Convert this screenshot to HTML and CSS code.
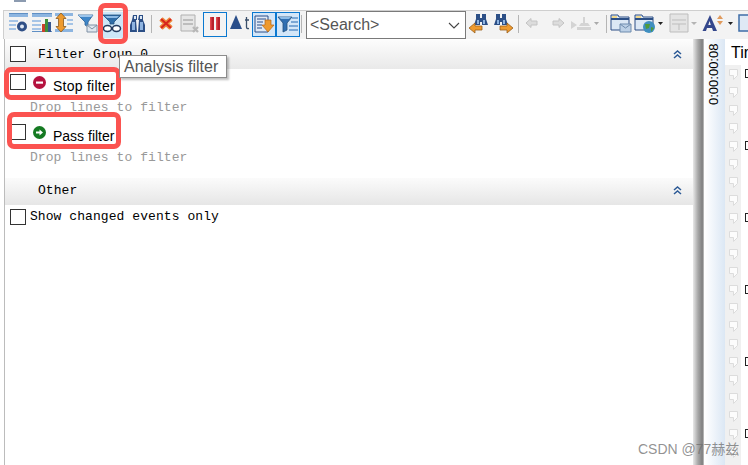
FILE: index.html
```html
<!DOCTYPE html>
<html lang="en">
<head>
    <meta charset="UTF-8">
    <meta name="viewport" content="width=device-width, initial-scale=1.0">
    <title>Analysis filter</title>
    <link rel="stylesheet" href="styles.css">
</head>
<body>
    <div class="top-strip"><span class="top-stub"></span></div>

    <div class="toolbar">
        <span class="tool"><svg width="22" height="22" viewBox="0 0 22 22"><path d="M0 1h19v4H0z" fill="#8db5e0"/><path d="M0 8h9v2H0zM0 12h7v2H0zM0 16h7v2H0z" fill="#a5c4e6"/><path d="M0 1h19v1H0z" fill="#5f8fc4"/><circle cx="13" cy="14.500" r="5" fill="#2f4f86"/><circle cx="13" cy="14.500" r="2" fill="#dfe8f4"/></svg></span>
        <span class="tool"><svg width="22" height="22" viewBox="0 0 22 22"><path d="M1 1h20v4H1z" fill="#8db5e0"/><path d="M1 8h9v2H1zM1 12h9v2H1zM1 16h9v2H1z" fill="#a5c4e6"/><path d="M1 1h20v1H1zM1 19h20v1H1z" fill="#5f8fc4"/><path d="M11 12h3v8h-3z" fill="#c8402c"/><path d="M14 7h3v13h-3z" fill="#3f8f3a"/><path d="M17 10h3v10h-3z" fill="#36558f"/></svg></span>
        <span class="tool"><svg width="22" height="22" viewBox="0 0 22 22"><path d="M2 1h18v3H2zM2 17h18v3H2z" fill="#8db5e0"/><path d="M14 7h6v2h-6zM14 11h6v2h-6z" fill="#a5c4e6"/><path d="M8 1l5 5.500h-2.500v8H13L8 20l-5-5.500h2.500v-8H3z" fill="#ee9a2e" stroke="#8a5a1e" stroke-width=".8"/></svg></span>
        <span class="tool gap-left"><svg width="24" height="22" viewBox="0 0 24 22"><path d="M1 3h15l-5 7v5l-3-2v-3z" fill="#3f86c8" stroke="#2a5f96" stroke-width=".8"/><path d="M1 3h15l-2 2H3z" fill="#9cc4ea"/><path d="M10 13h10v7H10z" fill="#dfe6ee" stroke="#7f90a4"/><path d="M10 13l5 4 5-4" fill="none" stroke="#7f90a4"/></svg></span>
        <span class="tool tool-on"><svg width="22" height="22" viewBox="0 0 22 22"><path d="M2 3h18l-7 7v2H9v-2z" fill="#2f6ea8" stroke="#21507e" stroke-width=".8"/><path d="M4 4h14l-2 2H6z" fill="#8cbbe6"/><ellipse cx="6.500" cy="16.500" rx="4" ry="3" fill="#fff" stroke="#223a5e" stroke-width="1.500"/><ellipse cx="15.500" cy="16.500" rx="4" ry="3" fill="#fff" stroke="#223a5e" stroke-width="1.500"/></svg></span>
        <span class="tool"><svg width="27" height="22" viewBox="0 0 27 22"><path d="M10 3h4v5h-1l1 12H7v-7l2-5zM16 3h4v5l2 5v7h-7l1-12h-1z" fill="#2c4f86"/><path d="M9 10h3v8H9zM17 10h3v8h-3z" fill="#8fb4e0"/><path d="M11 4h2v3h-2zM17 4h2v3h-2z" fill="#dce8f5"/></svg></span>
        <span class="sep"></span>
        <span class="tool"><svg width="24" height="22" viewBox="0 0 24 22"><path d="M7 7l10 9M17 7L7 16" stroke="#ee8a3c" stroke-width="5"/><path d="M7 7l10 9M17 7L7 16" stroke="#d8261c" stroke-width="2.200"/></svg></span>
        <span class="tool"><svg width="24" height="22" viewBox="0 0 24 22"><path d="M3 3h14v16H3z" fill="#e6e6e6" stroke="#b0b0b0"/><path d="M5 7h10v2H5zM5 11h10v2H5z" fill="#bdbdbd"/><path d="M15 15l5 5M20 15l-5 5" stroke="#b8b8b8" stroke-width="2.400"/></svg></span>
        <span class="tool tool-box tool-first"><svg width="22" height="22" viewBox="0 0 22 22"><path d="M6 4h4v13H6zM12 4h4v13h-4z" fill="#b8202a"/><path d="M6 4h1.500v13H6zM12 4h1.500v13H12z" fill="#e2474c"/></svg></span>
        <span class="tool"><svg width="25" height="22" viewBox="0 0 25 22"><path d="M9 3l6 14H3z" fill="#2b4f8a"/><path d="M18 8h4M19.500 5v10q0 2 2.500 1.500" fill="none" stroke="#3a4f6a" stroke-width="1.300"/></svg></span>
        <span class="tool tool-box tool-tint"><svg width="22" height="22" viewBox="0 0 22 22"><path d="M2 3h13v16H2z" fill="#dfe9f5" stroke="#2b4f8a"/><path d="M4 6h9M4 9h6M4 12h5M4 15h5" stroke="#2b4f8a"/><path d="M12 7h6v5h3l-6 7-6-7h3z" fill="#ee9a2e" stroke="#b0661a" stroke-width=".7"/></svg></span>
        <span class="tool tool-box tool-tint"><svg width="22" height="22" viewBox="0 0 22 22"><path d="M1 4h14l-5 6v7l-4 2v-9z" fill="#2f6fb2" stroke="#23507e" stroke-width=".8"/><path d="M2 4h12l-2 2H4z" fill="#8cbbe6"/><path d="M15 5h6M14 9h7M12 13h9M12 17h9" stroke="#5f93c9" stroke-width="1.500"/></svg></span>
        <span class="sep"></span>

        <div class="search-box">
            <span class="search-text">&lt;Search&gt;</span>
            <svg class="search-caret" width="12" height="7" viewBox="0 0 12 7"><path d="M1 1l5 5 5-5" fill="none" stroke="#444" stroke-width="1.100"/></svg>
        </div>

        <span class="tool"><svg width="24" height="22" viewBox="0 0 24 22"><path d="M8 2h4v4h2V2h4v5l2 6h-6v-3h-2v3H6l2-6z" fill="#2c4f86"/><path d="M9 8h2v4H9zM15 8h2v4h-2z" fill="#8fb4e0"/><path d="M1 16l6-5v3h7v4H7v3z" fill="#ee9a2e" stroke="#9a5f1c" stroke-width=".8"/></svg></span>
        <span class="tool"><svg width="24" height="22" viewBox="0 0 24 22"><path d="M4 2h4v4h2V2h4v5l2 6h-6v-3H8v3H2l2-6z" fill="#2c4f86"/><path d="M5 8h2v4H5zM11 8h2v4h-2z" fill="#8fb4e0"/><path d="M21 16l-6-5v3H8v4h7v3z" fill="#ee9a2e" stroke="#9a5f1c" stroke-width=".8"/></svg></span>
        <span class="sep sep-wide"></span>
        <span class="tool"><svg width="20" height="22" viewBox="0 0 20 22"><path d="M4 11l5-4.500V9h6v4H9v2.500z" fill="#dcdcdc" stroke="#c4c4c4"/></svg></span>
        <span class="tool"><svg width="26" height="22" viewBox="0 0 26 22"><path d="M22 11l-5-4.500V9h-6v4h6v2.500z" fill="#dcdcdc" stroke="#c4c4c4"/></svg></span>
        <span class="tool"><svg width="34" height="22" viewBox="0 0 34 22"><path d="M3 9l6 4-6 4zM9 15h14v3H9zM13 11h7l2 3H11zM15 5h2v6h-2z" fill="#d4d4d4"/><path d="M26 10h5l-2.500 3z" fill="#aaa"/></svg></span>
        <span class="sep sep-far"></span>
        <span class="tool"><svg width="24" height="22" viewBox="0 0 24 22"><path d="M2 3h7l1 2h10v13H2z" fill="#dce8f5" stroke="#2c4f86"/><path d="M2 7h18" stroke="#2c4f86" stroke-width="2"/><path d="M3 4h5v2H3z" fill="#f1d98c"/><path d="M11 12h11v8H11z" fill="#bcd0e6" stroke="#6f8cae"/><path d="M11 12l5.500 4 5.500-4" fill="none" stroke="#6f8cae"/></svg></span>
        <span class="tool"><svg width="32" height="22" viewBox="0 0 32 22"><path d="M2 3h7l1 2h10v13H2z" fill="#dce8f5" stroke="#2c4f86"/><path d="M2 7h18" stroke="#2c4f86" stroke-width="2"/><path d="M3 4h5v2H3z" fill="#f1d98c"/><circle cx="16" cy="15" r="6" fill="#3f8fc0"/><path d="M12 12l5 0-1 4-3 1zM18 15l3 1-3 4z" fill="#4e9a3a"/><path d="M25 10h5l-2.500 3z" fill="#222"/></svg></span>
        <span class="tool"><svg width="34" height="22" viewBox="0 0 34 22"><path d="M5 2h18v18H5z" fill="#e4e4e4" stroke="#bdbdbd"/><path d="M7 8h14M7 12h14M14 12v6" stroke="#bdbdbd"/><path d="M26 10h6l-3 3z" fill="#b4b4b4"/></svg></span>
        <span class="tool"><svg width="36" height="22" viewBox="0 0 36 22"><path d="M11 3l7 16h-4l-1-3H8l-1 3H3.500zM9.300 13h2.500l-1.200-4z" fill="#34478c" fill-rule="evenodd"/><path d="M18 7h6l-3-4zM18 9h6l-3 4z" fill="#e09a5c"/><path d="M29 10h5l-2.500 3z" fill="#222"/></svg></span>
        <span class="tool tool-last"><svg width="10" height="22" viewBox="0 0 10 22"><path d="M1 3h12v16H1z" fill="#dfe9f5" stroke="#3f6ea8" stroke-width="1.500"/></svg></span>
    </div>

    <div class="main">
        <div class="filter-panel">
            <div class="group-head">
                <label class="check"></label>
                <span class="mono">Filter Group 0</span>
                <svg class="collapse" width="9" height="9" viewBox="0 0 9 9"><path d="M1 4l3.500-3L8 4M1 8l3.500-3L8 8" fill="none" stroke="#2c5a96" stroke-width="1.500"/></svg>
            </div>

            <div class="filter-row row-stop">
                <label class="check"></label>
                <svg class="badge" width="13" height="13" viewBox="0 0 13 13"><circle cx="6.500" cy="6.500" r="6.500" fill="#b5123f"/><path d="M3 5.500h7v2.200H3z" fill="#fff"/></svg>
                <span class="filter-name">Stop filter</span>
            </div>
            <div class="drop-hint mono">Drop lines to filter</div>

            <div class="filter-row row-pass">
                <label class="check"></label>
                <svg class="badge" width="13" height="13" viewBox="0 0 13 13"><circle cx="6.500" cy="6.500" r="6.500" fill="#157a22"/><path d="M3 5.500h3.500V3.500l3.500 3-3.500 3V7.500H3z" fill="#fff"/></svg>
                <span class="filter-name">Pass filter</span>
            </div>
            <div class="drop-hint mono">Drop lines to filter</div>

            <div class="group-head group-other">
                <span class="mono">Other</span>
                <svg class="collapse" width="9" height="9" viewBox="0 0 9 9"><path d="M1 4l3.500-3L8 4M1 8l3.500-3L8 8" fill="none" stroke="#2c5a96" stroke-width="1.500"/></svg>
            </div>
            <div class="option-row">
                <label class="check"></label>
                <span class="mono option-text">Show changed events only</span>
            </div>
        </div>

        <div class="splitter"></div>
        <div class="time-strip"><span class="time-label">0:00:00:08</span></div>

        <div class="events">
            <div class="events-title">Time</div>
            <div class="events-rows" id="eventRows"></div>
        </div>
    </div>

    <!-- things lying over the window -->
    <div class="mark mark-tool"></div>
    <div class="mark mark-stop"></div>
    <div class="mark mark-pass"></div>
    <div class="tooltip">Analysis filter</div>
    <div class="watermark">CSDN @77赫兹</div>

    <script>
        const rows = document.getElementById("eventRows");
        for (let i = 0; i < 23; i++) {
            const box = i % 4 === 0 ? '<span class="expander"></span>' : "";
            rows.innerHTML += `<div class="event-row"><span class="gutter"><svg width="11" height="13" viewBox="0 0 11 13"><path d="M1.500 1.500h8v6l-4 4v-4h-4z" fill="#fcfcfc" stroke="#dcdcdc"/></svg></span>${box}</div>`;
        }
    </script>
</body>
</html>
```

FILE: styles.css
```css
html, body {
    margin: 0;
    padding: 0;
    height: 100%;
    overflow: hidden;
    background-color: #fff;
}

body {
    position: relative;
    font-family: "Liberation Sans", Arial, sans-serif;
    color: #000;
}

.mono {
    font-family: "Liberation Mono", "Courier New", monospace;
    font-size: 13px;
    letter-spacing: 0.07px;
}

.top-strip {
    height: 10px;
    margin-left: 3px;
    border-bottom: 1px solid #cfcfcf;
}

.top-stub {
    display: block;
    width: 12px;
    height: 2px;
    margin-left: 11px;
    background-color: #8c9bb0;
}

.toolbar {
    display: flex;
    align-items: center;
    height: 28px;
    margin-left: 3px;
    padding-left: 5px;
    background-color: #f3f3f3;
    border-left: 1px solid #cfcfcf;
}

.tool {
    display: flex;
    align-items: center;
    justify-content: center;
    flex: none;
}

.tool svg {
    display: block;
    margin-bottom: 4px;
}

.gap-left {
    margin-left: 2px;
}

.tool-on {
    background-color: #cde6f7;
}

.tool-box {
    height: 25px;
    box-sizing: border-box;
    margin-bottom: 1px;
    border: 1px solid #0a78d0;
}

.tool-box svg {
    margin-bottom: 2px;
}

.tool-tint {
    background-color: #d3e6f8;
}

.tool-first {
    margin-left: 1px;
}

.tool-last {
    margin-left: 3px;
    overflow: hidden;
}

.sep {
    flex: none;
    width: 1px;
    height: 18px;
    margin: 0 2px 2px 1px;
    background-color: #b5b5b5;
}

.sep-wide {
    margin: 0 3px 2px 2px;
}

.sep-far {
    margin: 0 2px 2px 4px;
}

.search-box {
    flex: none;
    display: flex;
    align-items: center;
    justify-content: space-between;
    width: 160px;
    height: 28px;
    margin: 0 2px;
    padding: 0 5px 0 3px;
    box-sizing: border-box;
    background-color: #fff;
    border: 1px solid #7a7a7a;
}

.search-text {
    font-size: 16px;
    color: #555;
}

.main {
    display: flex;
    height: 426px;
}

.filter-panel {
    flex: none;
    width: 688px;
    margin-left: 4px;
    border-left: 1px solid #bcbcbc;
}

.group-head {
    display: flex;
    align-items: center;
    height: 30px;
    padding: 0 11px 0 5px;
    background: linear-gradient(#fdfdfd, #e9e9e9);
}

.group-head .mono {
    margin-left: 12px;
}

.group-other {
    height: 27px;
    box-sizing: border-box;
    padding-left: 21px;
    padding-bottom: 3px;
    margin-top: 11px;
    background: linear-gradient(#fbfbfb, #e6e6e6);
}

.group-other .mono {
    margin-left: 12px;
}

.collapse {
    margin-left: auto;
}

.check {
    display: block;
    flex: none;
    width: 16px;
    height: 16px;
    box-sizing: border-box;
    background-color: #fff;
    border: 1px solid #333;
}

.filter-row {
    display: flex;
    align-items: center;
    height: 16px;
    padding-left: 5px;
}

.row-stop {
    margin-top: 5px;
}

.row-stop .filter-name {
    letter-spacing: 0.25px;
}

.row-pass {
    margin-top: 7px;
}

.badge {
    margin-left: 7px;
    margin-top: 1px;
}

.filter-name {
    margin-left: 7px;
    margin-top: 7px;
    font-size: 14px;
}

.drop-hint {
    height: 18px;
    margin-top: 9px;
    padding-left: 25px;
    line-height: 18px;
    color: #999;
}

.option-row {
    display: flex;
    align-items: center;
    gap: 4px;
    height: 16px;
    margin-top: 4px;
    padding-left: 5px;
}

.option-text {
    margin-bottom: 2px;
}

.splitter {
    flex: none;
    width: 11px;
    background: linear-gradient(to right, #e8e8e8, #a8a8a8 45%, #7f7f7f 85%, #c8c8c8);
}

.time-strip {
    flex: none;
    width: 20px;
    margin-left: 1px;
    padding-top: 2px;
    box-sizing: border-box;
    background: linear-gradient(to right, #ffffff, #dbe7f4);
}

.time-label {
    display: block;
    writing-mode: vertical-rl;
    transform: rotate(180deg);
    font-size: 13px;
    line-height: 18px;
    height: 64px;
    white-space: nowrap;
}

.events {
    flex: 1;
    min-width: 0;
    overflow: hidden;
}

.events-title {
    height: 26px;
    padding-left: 6px;
    font-size: 16px;
    line-height: 28px;
    white-space: nowrap;
}

.event-row {
    display: flex;
    height: 18px;
}

.gutter {
    flex: none;
    display: flex;
    align-items: center;
    justify-content: center;
    width: 16px;
    background-color: #f0f0f0;
}

.expander {
    flex: none;
    width: 9px;
    height: 9px;
    margin: 4px 0 0 4px;
    box-sizing: border-box;
    border: 1px solid #222;
    background-color: #fff;
}

.mark {
    position: absolute;
    box-sizing: border-box;
    border: 5px solid #fb5350;
    border-radius: 7px;
}

.mark-tool {
    left: 98px;
    top: 3px;
    width: 30px;
    height: 41px;
}

.mark-stop {
    left: 4px;
    top: 67px;
    width: 117px;
    height: 33px;
}

.mark-pass {
    left: 7px;
    top: 112px;
    width: 114px;
    height: 37px;
}

.tooltip {
    position: absolute;
    left: 119px;
    top: 55px;
    width: 108px;
    height: 23px;
    box-sizing: border-box;
    padding-left: 4px;
    background-color: #fff;
    border: 1px solid #8c8c8c;
    box-shadow: 2px 2px 2px rgba(0, 0, 0, 0.25);
    font-size: 16px;
    line-height: 21px;
    color: #555;
    white-space: nowrap;
}

.watermark {
    position: absolute;
    left: 638px;
    top: 441px;
    font-family: "Liberation Sans", "Noto Sans CJK SC", sans-serif;
    font-size: 14px;
    line-height: 16px;
    color: rgba(110, 110, 110, 0.75);
    white-space: nowrap;
}
```
